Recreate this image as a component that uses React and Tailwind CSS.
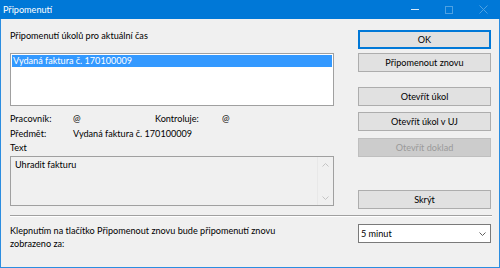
import React from 'react';

const font = { fontFamily: 'Lato, "Noto Sans", sans-serif' };

const Button = ({ children, className = '', primary, disabled }) => (
  <div
    className={`h-[19px] flex items-center justify-center text-[9.1px] leading-none ${
      disabled
        ? 'bg-[#cccccc] border border-[#bfbfbf] text-[#9a9a9a]'
        : primary
        ? 'bg-[#e1e1e1] border-2 border-[#0078d7] text-black'
        : 'bg-[#e1e1e1] border border-[#adadad] text-black'
    } ${className}`}
  >
    {children}
  </div>
);

const Chevron = ({ up, className = '' }) => (
  <svg width="7" height="4" viewBox="0 0 7 4" className={className}>
    <path d={up ? 'M0.5 3.5 L3.5 0.5 L6.5 3.5' : 'M0.5 0.5 L3.5 3.5 L6.5 0.5'} fill="none" stroke="currentColor" strokeWidth="1" />
  </svg>
);

export default function App() {
  return (
    <div className="w-[500px] h-[268px] bg-[#f0f0f0] border border-[#2b8de0] flex flex-col text-black text-[9.1px]" style={font}>
      {/* title bar */}
      <div className="h-[19px] shrink-0 -mx-px -mt-px bg-[#0078d7] flex items-center text-white text-[9.1px] pl-[3px]">
        <span className="flex-1">Připomenutí</span>
        <div className="flex items-center h-full">
          <div className="w-[8px] h-px bg-[#d9eaf8] mr-[26px]"></div>
          <div className="w-[8px] h-[8px] border border-[#4da1e3] mr-[26px]"></div>
          <svg width="9" height="9" viewBox="0 0 9 9" className="mr-[12px]">
            <path d="M0.5 0.5 L8.5 8.5 M8.5 0.5 L0.5 8.5" stroke="#4da1e3" strokeWidth="1" />
          </svg>
        </div>
      </div>

      <div className="flex pl-[9px] pr-[7px]">
        {/* left column */}
        <div className="w-[324px] flex flex-col whitespace-nowrap">
          <div className="mt-[10px] leading-[13px]">Připomenutí úkolů pro aktuální čas</div>
          <div className="mt-[11px] h-[53px] bg-white border border-[#a0a0a0] p-px">
            <div className="h-[12px] bg-[#3399ff] text-white leading-[12px] pl-px">Vydaná faktura č. 170100009</div>
          </div>
          <div className="mt-[6px] flex leading-[13px]">
            <span className="w-[63px]">Pracovník:</span>
            <span className="w-[82px]">@</span>
            <span className="w-[67px]">Kontroluje:</span>
            <span>@</span>
          </div>
          <div className="mt-[2px] flex leading-[13px]">
            <span className="w-[63px]">Předmět:</span>
            <span>Vydaná faktura č. 170100009</span>
          </div>
          <div className="mt-px leading-[13px]">Text</div>
          <div className="mt-[2px] h-[50px] border border-[#a0a0a0] flex">
            <div className="flex-1 pl-[4px] pt-px leading-[13px]">Uhradit fakturu</div>
            <div className="w-[16px] flex flex-col items-center justify-between pt-[6px] pb-[5px] text-[#c4c4c4] border-l border-[#e8e8e8]">
              <Chevron up />
              <Chevron />
            </div>
          </div>
        </div>

        {/* right column */}
        <div className="ml-[24px] w-[133px] flex flex-col">
          <Button primary className="mt-[11px]">OK</Button>
          <Button className="mt-[4px]">Připomenout znovu</Button>
          <Button className="mt-[15px]">Otevřít úkol</Button>
          <Button className="mt-[6px]">Otevřít úkol v UJ</Button>
          <Button disabled className="mt-[7px]">Otevřít doklad</Button>
          <Button className="mt-[33px]">Skrýt</Button>
        </div>
      </div>

      <div className="mt-[6px] ml-[9px] mr-[7px] h-px bg-[#a0a0a0] border-b border-white box-content"></div>

      <div className="flex pl-[9px] pr-[7px] mt-[7px]">
        <div className="w-[324px] leading-[13px] whitespace-nowrap">
          Klepnutím na tlačítko Připomenout znovu bude připomenutí znovu
          <br />
          zobrazeno za:
        </div>
        <div className="ml-[24px] w-[133px] h-[19px] bg-white border border-[#7a7a7a] flex items-center pl-[2px] pr-[4px]">
          <span className="flex-1">5 minut</span>
          <Chevron className="text-[#606060]" />
        </div>
      </div>
    </div>
  );
}
